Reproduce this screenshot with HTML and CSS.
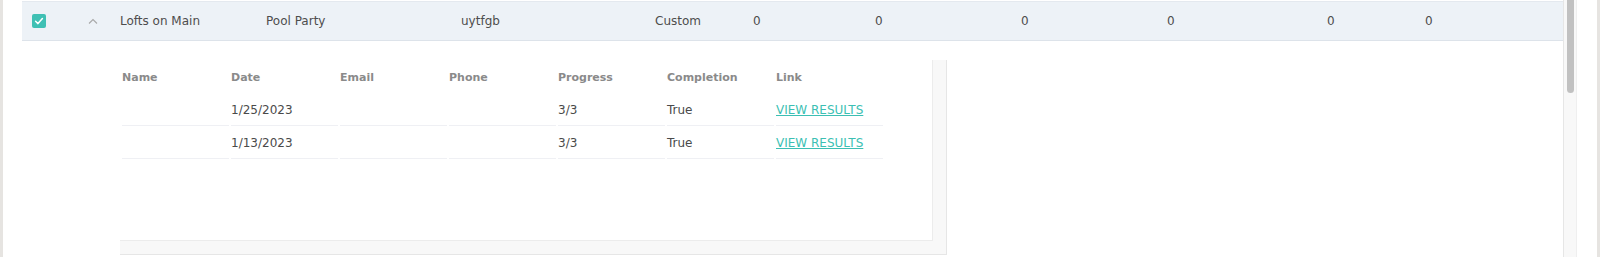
FILE: index.html
```html
<!DOCTYPE html>
<html lang="en">
<head>
    <meta charset="UTF-8">
    <meta name="viewport" content="width=device-width, initial-scale=1.0">
    <title>Campaign results</title>
    <link rel="stylesheet" href="styles.css">
</head>
<body>
    <div class="frame">
        <div class="content">
            <div class="row">
                <div class="cell-ctrl">
                    <span class="check">
                        <svg width="14" height="14" viewBox="0 0 14 14"><polyline points="3.6,7.3 6,9.6 10.4,4.6" fill="none" stroke="#fff" stroke-width="1.5" stroke-linecap="round" stroke-linejoin="round"/></svg>
                    </span>
                    <svg class="chev" width="12" height="8" viewBox="0 0 12 8"><polyline points="2,6.5 6,2.5 10,6.5" fill="none" stroke="#a8a8a8" stroke-width="1.1"/></svg>
                </div>
                <div>Lofts on Main</div>
                <div>Pool Party</div>
                <div>uytfgb</div>
                <div>Custom</div>
                <div>0</div>
                <div>0</div>
                <div>0</div>
                <div>0</div>
                <div>0</div>
                <div>0</div>
            </div>

            <div class="detail">
                <div class="detail-inner">
                    <table class="sub">
                        <thead>
                            <tr>
                                <th>Name</th>
                                <th>Date</th>
                                <th>Email</th>
                                <th>Phone</th>
                                <th>Progress</th>
                                <th>Completion</th>
                                <th>Link</th>
                            </tr>
                        </thead>
                        <tbody>
                            <tr>
                                <td></td>
                                <td>1/25/2023</td>
                                <td></td>
                                <td></td>
                                <td>3/3</td>
                                <td>True</td>
                                <td><a href="#">VIEW RESULTS</a></td>
                            </tr>
                            <tr>
                                <td></td>
                                <td>1/13/2023</td>
                                <td></td>
                                <td></td>
                                <td>3/3</td>
                                <td>True</td>
                                <td><a href="#">VIEW RESULTS</a></td>
                            </tr>
                        </tbody>
                    </table>
                </div>
            </div>
        </div>
        <div class="scrollbar">
            <div class="thumb"></div>
        </div>
    </div>
</body>
</html>
```

FILE: styles.css
```css
*{
  box-sizing: border-box;
}
body{
  margin: 0;
  background: #fff;
  font-family: "DejaVu Sans", "Liberation Sans", sans-serif;
  font-size: 12px;
  color: #4a4a4a;
}
.frame{
  display: flex;
  width: 1600px;
  height: 257px;
  padding: 0 20px 0 19px;
  border-left: 3px solid #e6e4e1;
  border-right: 3px solid #e6e4e1;
  overflow: hidden;
}
.content{
  flex: 1;
  min-width: 0;
}

/* main row */
.row{
  display: grid;
  grid-template-columns: 98px 146px 195px 194px 98px 122px 146px 146px 160px 98px 1fr;
  align-items: center;
  height: 40px;
  margin-top: 1px;
  background: #edf2f7;
  border-top: 1px solid #e4e9ef;
  border-bottom: 1px solid #dde3ea;
  color: #4d4d4d;
}
.cell-ctrl{
  display: flex;
  align-items: center;
  padding-left: 10px;
}
.check{
  display: flex;
  width: 14px;
  height: 14px;
  border-radius: 2px;
  background: #3fc0b4;
}
.chev{
  margin-left: 41px;
}

/* expanded detail */
.detail{
  width: 827px;
  margin: 19px 0 0 98px;
  padding: 0 13px 13px 0;
  background: #f8f8f8;
  border-right: 1px solid #e6e6e6;
  border-bottom: 1px solid #e6e6e6;
}
.detail-inner{
  height: 181px;
  background: #fff;
  border-right: 1px solid #ececec;
  border-bottom: 1px solid #ececec;
}
.sub{
  border-collapse: separate;
  border-spacing: 2px;
  table-layout: fixed;
  width: 751px;
}
.sub th,
.sub td{
  width: 107px;
  padding: 0;
  text-align: left;
  vertical-align: middle;
  white-space: nowrap;
}
.sub th{
  height: 31px;
  font-size: 11px;
  font-weight: bold;
  color: #8a8a8a;
}
.sub td{
  height: 31px;
  border-bottom: 1px solid #eff0f4;
  color: #4a4a4a;
}
.sub a{
  color: #3cbfb3;
  text-decoration: underline;
}

/* fake scrollbar */
.scrollbar{
  width: 14px;
  background: #f8f8f8;
  border-left: 1px solid #e6e6e6;
  border-right: 1px solid #efefef;
  padding: 0 2px 0 3px;
}
.thumb{
  height: 93px;
  background: #c1c1c1;
  border-radius: 0 0 4px 4px;
}
```
